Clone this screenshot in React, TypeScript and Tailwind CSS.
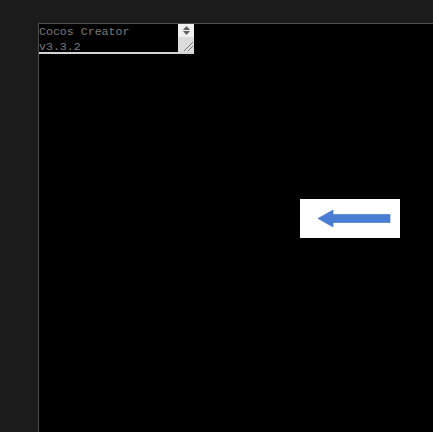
export default function App() {
  return (
    <div className="h-[432px] w-[433px] overflow-hidden bg-[#1b1b1b] pl-[38px] pt-[23px]">
      <div className="relative h-full w-full border-l border-t border-[#4d4d4d] bg-black">
        {/* debug console textarea */}
        <div className="flex h-[30px] w-[155px] border-b-2 border-[#d4d4d4]">
          <div className="flex-1 overflow-hidden pl-0 text-[11.6px] leading-[15px] text-[#7c7c7c] [font-family:'Liberation_Mono',monospace]">
            <div>Cocos Creator</div>
            <div>v3.3.2</div>
          </div>
          <div className="flex w-[16px] flex-col bg-[#dcdcdc]">
            <div className="flex h-[13px] flex-col items-center justify-center gap-[1px] bg-[#f0f0f0]">
              <svg width="7" height="4" viewBox="0 0 7 4">
                <polygon points="3.5,0 7,4 0,4" fill="#606060" />
              </svg>
              <svg width="7" height="4" viewBox="0 0 7 4">
                <polygon points="0,0 7,0 3.5,4" fill="#606060" />
              </svg>
            </div>
            <div className="flex flex-1 items-end justify-end">
              <svg width="12" height="12" viewBox="0 0 12 12">
                <line x1="2" y1="11" x2="11" y2="2" stroke="#777" strokeWidth="1" />
                <line x1="6" y1="11" x2="11" y2="6" stroke="#777" strokeWidth="1" />
              </svg>
            </div>
          </div>
        </div>

        {/* back button */}
        <div className="absolute left-[261px] top-[175px] flex h-[39px] w-[100px] items-center bg-white">
          <svg width="100" height="39" viewBox="0 0 100 39">
            <polygon
              points="18,19.5 33,11 33,15.5 90,15.5 90,23.5 33,23.5 33,28"
              fill="#4a7ed4"
              stroke="#3f6fbf"
              strokeWidth="0.6"
            />
          </svg>
        </div>
      </div>
    </div>
  );
}
